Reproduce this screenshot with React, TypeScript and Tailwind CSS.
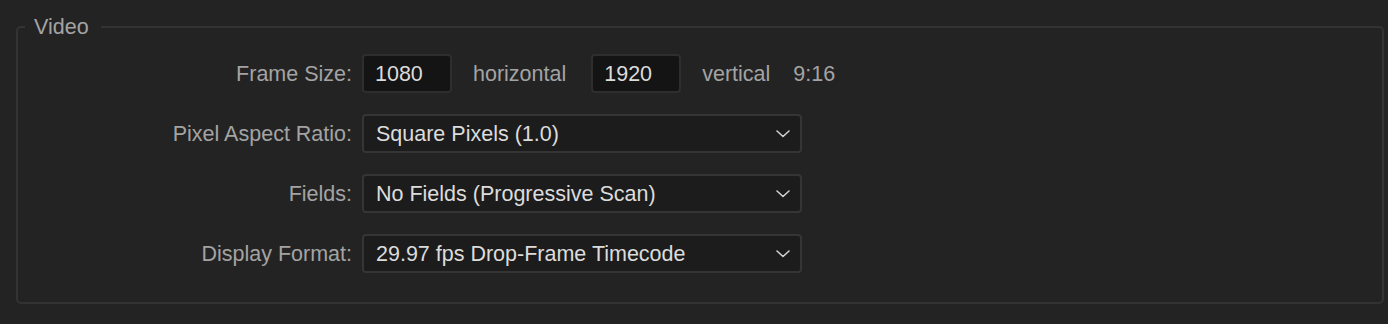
const font = { fontFamily: '"Liberation Sans", Arial, sans-serif' };

function Label({ children }: { children: string }) {
  return (
    <span className="w-[344px] shrink-0 pr-[10px] text-right text-[#a3a3a3]">
      {children}
    </span>
  );
}

function NumberBox({ value }: { value: string }) {
  return (
    <div className="flex h-[39px] w-[90px] items-center rounded-[4px] border-2 border-[#2e2e2e] bg-[#141414] pl-[11px] text-[#dcdcdc]">
      {value}
    </div>
  );
}

function Chevron() {
  return (
    <svg width="14" height="8" viewBox="0 0 14 8" fill="none" className="shrink-0">
      <path d="M1 1l6 5.5L13 1" stroke="#cfcfcf" strokeWidth="1.6" strokeLinecap="round" strokeLinejoin="round" />
    </svg>
  );
}

function Select({ value }: { value: string }) {
  return (
    <div className="flex h-[39px] w-[440px] items-center justify-between rounded-[4px] border-2 border-[#353535] bg-[#1c1c1c] pl-[12px] pr-[10px] text-[#dcdcdc]">
      <span>{value}</span>
      <Chevron />
    </div>
  );
}

export default function App() {
  return (
    <div
      className="h-[324px] w-[1388px] overflow-hidden bg-[#232323] pt-[15px] pl-4 pr-1 text-[21.5px] leading-6"
      style={font}
    >
      <fieldset className="h-[289px] rounded-[5px] border-2 border-[#333333] pb-[29px]">
        <legend className="ml-[7px] pl-[9px] pr-[12px] text-[#a3a3a3]">Video</legend>

        <div className="flex flex-col gap-[21px] pt-[15px]">
          <div className="flex items-center">
            <Label>Frame Size:</Label>
            <NumberBox value="1080" />
            <span className="ml-[21px] text-[#a3a3a3]">horizontal</span>
            <div className="ml-[25px]">
              <NumberBox value="1920" />
            </div>
            <span className="ml-[21px] text-[#a3a3a3]">vertical</span>
            <span className="ml-[23px] text-[#a3a3a3]">9:16</span>
          </div>

          <div className="flex items-center">
            <Label>Pixel Aspect Ratio:</Label>
            <Select value="Square Pixels (1.0)" />
          </div>

          <div className="flex items-center">
            <Label>Fields:</Label>
            <Select value="No Fields (Progressive Scan)" />
          </div>

          <div className="flex items-center">
            <Label>Display Format:</Label>
            <Select value="29.97 fps Drop-Frame Timecode" />
          </div>
        </div>
      </fieldset>
    </div>
  );
}
